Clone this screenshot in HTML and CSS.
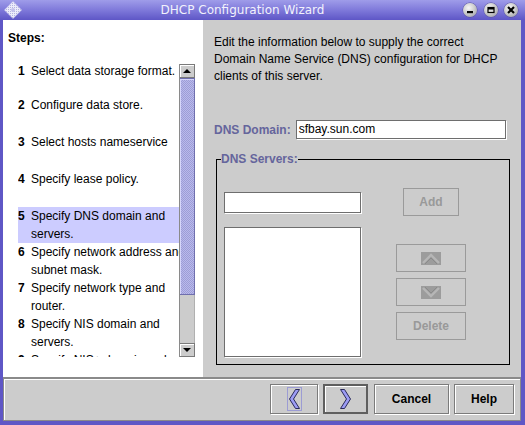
FILE: index.html
```html
<!DOCTYPE html>
<html>
<head>
<meta charset="utf-8">
<title>DHCP Configuration Wizard</title>
<link rel="stylesheet" href="styles.css">
</head>
<body>
<div class="window">
  <div class="titlebar">
    <svg class="app-icon" width="18" height="18" viewBox="0 0 18 18">
      <defs>
        <pattern id="grid" width="2" height="2" patternUnits="userSpaceOnUse">
          <rect width="2" height="2" fill="#ececfa"/>
          <rect width="1" height="1" fill="#b4b2e0"/>
        </pattern>
      </defs>
      <polygon points="9,0.5 17.5,9 9,17.5 0.5,9" fill="url(#grid)" stroke="#d8d6f4" stroke-width="0.6"/>
      <circle cx="9" cy="9" r="2" fill="#c4c2ea"/>
    </svg>
    <div class="title">DHCP Configuration Wizard</div>
    <div class="wm-buttons">
      <span class="wm-btn"><svg width="14" height="14" viewBox="0 0 14 14"><rect x="4" y="8" width="6" height="2.2" fill="#000"/></svg></span>
      <span class="wm-btn"><svg width="14" height="14" viewBox="0 0 14 14"><rect x="4" y="4.5" width="6" height="5" fill="none" stroke="#000" stroke-width="1.2"/><rect x="4" y="4.5" width="6" height="2" fill="#000"/></svg></span>
      <span class="wm-btn"><svg width="14" height="14" viewBox="0 0 14 14"><path d="M4 4 L10 10 M10 4 L4 10" stroke="#000" stroke-width="2.2"/></svg></span>
    </div>
  </div>

  <div class="frame">
    <div class="main">
      <div class="steps">
        <div class="steps-title">Steps:</div>
        <div class="steps-body">
          <div class="steps-list">
            <div class="step single first"><span class="num">1</span><span class="txt">Select data storage format.</span></div>
            <div class="step single"><span class="num">2</span><span class="txt">Configure data store.</span></div>
            <div class="step single"><span class="num">3</span><span class="txt">Select hosts nameservice</span></div>
            <div class="step single"><span class="num">4</span><span class="txt">Specify lease policy.</span></div>
            <div class="step current"><span class="num">5</span><span class="txt">Specify DNS domain and<br>servers.</span></div>
            <div class="step"><span class="num">6</span><span class="txt">Specify network address and<br>subnet mask.</span></div>
            <div class="step"><span class="num">7</span><span class="txt">Specify network type and<br>router.</span></div>
            <div class="step"><span class="num">8</span><span class="txt">Specify NIS domain and<br>servers.</span></div>
            <div class="step"><span class="num">9</span><span class="txt">Specify NIS+ domain and<br>servers.</span></div>
          </div>
          <div class="scrollbar">
            <div class="sb-btn"><span class="arrow-up"></span></div>
            <div class="sb-thumb"></div>
            <div class="sb-track"></div>
            <div class="sb-btn"><span class="arrow-down"></span></div>
          </div>
        </div>
      </div>

      <div class="content">
        <p class="intro">Edit the information below to supply the correct<br>Domain Name Service (DNS) configuration for DHCP<br>clients of this server.</p>
        <div class="domain-row">
          <span class="field-label">DNS Domain:</span>
          <div class="textfield domain-field">sfbay.sun.com</div>
        </div>
        <fieldset class="servers">
          <legend>DNS Servers:</legend>
          <div class="servers-grid">
            <div class="textfield server-field"></div>
            <div class="btn disabled add-btn">Add</div>
            <div class="listbox"></div>
            <div class="btn-stack">
              <div class="btn disabled side-btn">
                <svg width="20" height="13" viewBox="0 0 20 13"><rect width="20" height="13" fill="#9c9c9c"/><polyline points="2,11 10,3 18,11" fill="none" stroke="#b6b6b6" stroke-width="2.4"/><polyline points="4,12 10,6 16,12" fill="none" stroke="#8a8a8a" stroke-width="1"/></svg>
              </div>
              <div class="btn disabled side-btn">
                <svg width="20" height="13" viewBox="0 0 20 13"><rect width="20" height="13" fill="#9c9c9c"/><polyline points="2,2 10,10 18,2" fill="none" stroke="#b6b6b6" stroke-width="2.4"/><polyline points="4,1 10,7 16,1" fill="none" stroke="#8a8a8a" stroke-width="1"/></svg>
              </div>
              <div class="btn disabled side-btn">Delete</div>
            </div>
          </div>
        </fieldset>
      </div>
    </div>

    <div class="footer">
      <div class="btn nav-back">
        <span class="focus-ring">
          <svg width="11" height="20" viewBox="0 0 11 20"><polygon points="10.5,0.5 6.5,0.5 0.5,10 6.5,19.5 10.5,19.5 4.5,10" fill="#9c9cf4" stroke="#2a2a5a" stroke-width="1"/></svg>
        </span>
      </div>
      <div class="btn default nav-next">
        <svg width="13" height="20" viewBox="0 0 13 20"><polygon points="1.5,0.5 5.5,0.5 11.5,10 5.5,19.5 1.5,19.5 7.5,10" fill="#9c9cf4" stroke="#2a2a5a" stroke-width="1"/></svg>
      </div>
      <div class="btn cancel-btn">Cancel</div>
      <div class="btn help-btn">Help</div>
    </div>
  </div>
</div>
</body>
</html>
```

FILE: styles.css
```css
html, body {
  margin: 0;
  padding: 0;
}

body {
  background: #5f57c6;
  font-family: "Liberation Sans", Arial, sans-serif;
  font-size: 12px;
  color: #000;
}

.window {
  width: 525px;
  height: 425px;
  display: flex;
  flex-direction: column;
  overflow: hidden;
}

/* Title bar */
.titlebar {
  height: 20px;
  flex: none;
  display: flex;
  align-items: center;
  background: linear-gradient(#9f9ce9, #7f79da 50%, #5e56c6);
}

.app-icon {
  margin-left: 4px;
  flex: none;
}

.title {
  flex: 1;
  text-align: center;
  font-family: "DejaVu Sans", sans-serif;
  font-size: 12px;
  color: #f2f2fc;
  line-height: 20px;
}

.wm-buttons {
  display: flex;
  gap: 6.5px;
  margin-right: 7px;
}

.wm-btn {
  width: 14px;
  height: 14px;
  border-radius: 50%;
  background: radial-gradient(circle at 40% 35%, #f6f6f6, #cfcfcf 45%, #8e8e9a 100%);
  box-shadow: 0 0 0 0.5px #55509a;
  display: flex;
  align-items: center;
  justify-content: center;
}

/* Window body */
.frame {
  flex: 1;
  display: flex;
  flex-direction: column;
  padding: 0 4px 4px 3px;
}

.main {
  height: 357px;
  display: flex;
  flex: none;
}

/* Steps panel */
.steps {
  width: 200px;
  flex: none;
  background: #fff;
  padding: 10px 0 0 5px;
  box-sizing: border-box;
}

.steps-title {
  font-weight: bold;
  line-height: 17px;
}

.steps-body {
  display: flex;
  margin: 15px 0 0 10px;
  height: 295px;
}

.steps-list {
  width: 161px;
  overflow: hidden;
}

.step {
  display: flex;
  height: 36px;
  line-height: 18px;
  white-space: nowrap;
}

.step.single {
  height: 37px;
}

.step.first {
  height: 34px;
}

.step.current {
  background: #ccccff;
}

.num {
  width: 13px;
  flex: none;
  font-weight: bold;
}

/* Scrollbar */
.scrollbar {
  width: 16px;
  margin-top: 2px;
  display: flex;
  flex-direction: column;
  box-sizing: border-box;
  border-left: 1px solid #8a8a8a;
  background: #cccccc;
}

.sb-btn {
  height: 14px;
  flex: none;
  box-sizing: border-box;
  background: #cccccc;
  border: 1px solid #7a7a7a;
  border-left: none;
  box-shadow: inset 1px 1px 0 #fff;
  display: flex;
  align-items: center;
  justify-content: center;
}

.arrow-up {
  width: 0;
  height: 0;
  border-left: 4px solid transparent;
  border-right: 4px solid transparent;
  border-bottom: 4px solid #000;
}

.arrow-down {
  width: 0;
  height: 0;
  border-left: 4px solid transparent;
  border-right: 4px solid transparent;
  border-top: 4px solid #000;
}

.sb-thumb {
  height: 217px;
  flex: none;
  box-sizing: border-box;
  border: 1px solid #6f6fae;
  border-left: none;
  background: repeating-conic-gradient(#9d9dd6 0% 25%, #b9b9ec 0% 50%) 0 0 / 2px 2px;
  box-shadow: inset 1px 1px 0 #d6d6fa;
}

.sb-track {
  flex: 1;
  background: #cccccc;
  border-right: 1px solid #b0b0b0;
}

/* Content panel */
.content {
  flex: 1;
  background: #cccccc;
  padding: 14px 0 0 11px;
}

.intro {
  margin: 0;
  line-height: 17px;
  white-space: nowrap;
}

.domain-row {
  display: flex;
  align-items: center;
  gap: 5px;
  margin-top: 35px;
}

.field-label {
  font-weight: bold;
  color: #65659c;
}

.textfield {
  background: #fff;
  border: 1px solid #6e6e6e;
  box-shadow: 1px 1px 0 #fff;
  box-sizing: border-box;
  padding-left: 2px;
}

.domain-field {
  width: 210px;
  height: 19px;
  line-height: 17px;
}

.servers {
  margin: 13px 0 0 2px;
  padding: 21px 43px 7px 7px;
  border: 1px solid #000;
  width: 294px;
  box-sizing: border-box;
  min-width: 0;
}

.servers legend {
  padding: 0;
  margin-left: -3px;
  font-weight: bold;
  color: #65659c;
  line-height: 15px;
}

.servers-grid {
  display: grid;
  grid-template-columns: 137px 70px;
  column-gap: 35px;
  row-gap: 11px;
  align-items: center;
}

.server-field {
  height: 21px;
}

.listbox {
  height: 130px;
  align-self: start;
  background: #fff;
  border: 1px solid #6e6e6e;
  box-shadow: 1px 1px 0 #fff;
  box-sizing: border-box;
}

.btn-stack {
  align-self: start;
  display: flex;
  flex-direction: column;
  gap: 6px;
  padding-top: 17px;
}

/* Buttons */
.btn {
  height: 30px;
  box-sizing: border-box;
  background: #cccccc;
  border: 1px solid #7b7b7b;
  box-shadow: inset 1px 1px 0 #fff, 1px 1px 0 #fff;
  font-weight: bold;
  font-size: 12px;
  display: flex;
  align-items: center;
  justify-content: center;
}

.btn.disabled {
  border-color: #9a9a9a;
  box-shadow: none;
  color: #999999;
}

.add-btn {
  width: 56px;
  height: 28px;
  justify-self: center;
}

.side-btn {
  width: 70px;
  height: 28px;
}

.footer {
  height: 44px;
  flex: none;
  box-sizing: border-box;
  background: #cccccc;
  border: 1px solid #8a8a8a;
  border-top-width: 2px;
  box-shadow: inset 1px 1px 0 #fff;
  display: flex;
  justify-content: flex-end;
  align-items: center;
  gap: 5px;
  padding: 0 6px 1px 0;
}

.nav-back {
  width: 48px;
}

.focus-ring {
  display: flex;
  border: 1px solid #9c9cd4;
  padding: 1px 1px;
}

.btn.default {
  border: 2px solid #5f5f5f;
  box-shadow: inset 1px 1px 0 #fff;
}

.nav-next {
  width: 45px;
}

.cancel-btn {
  width: 75px;
  margin-left: 1px;
}

.help-btn {
  width: 60px;
}
```
